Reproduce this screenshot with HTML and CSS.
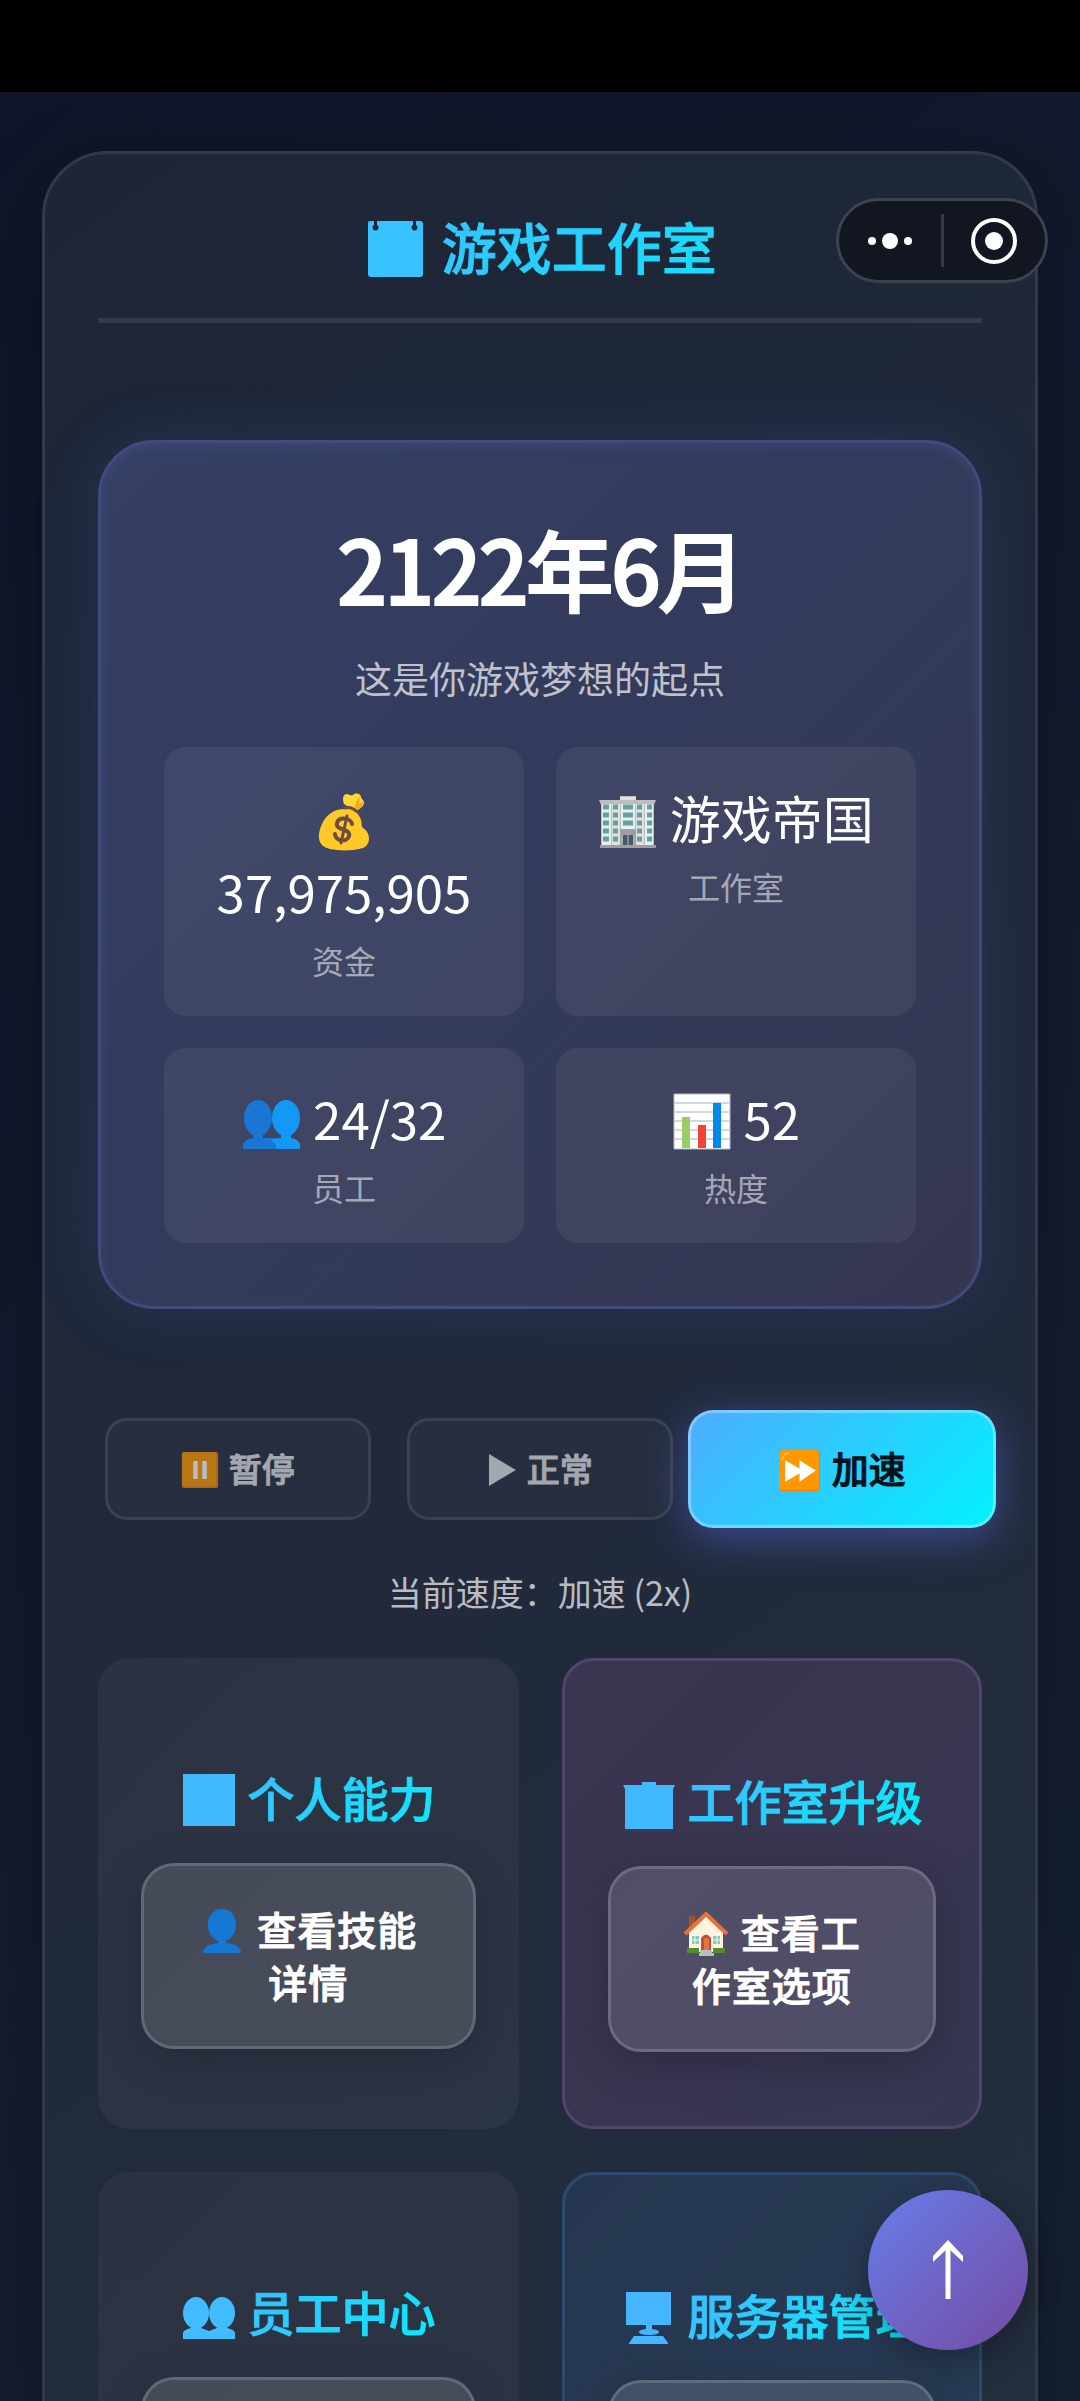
FILE: index.html
```html
<!DOCTYPE html>
<html lang="zh-CN">
<head>
    <meta charset="UTF-8">
    <meta name="viewport" content="width=device-width, initial-scale=1.0">
    <title>游戏工作室</title>
    <link rel="stylesheet" href="styles.css">
</head>
<body>
    <div class="status-bar"></div>

    <div class="container">
        <header class="header">
            <h1>
                <svg class="icon-title" viewBox="0 0 64 64" aria-hidden="true">
                    <path fill="#38c2ff" d="M7 4H11V8A3 3 0 1 0 14 8V4H50V8A3 3 0 1 0 53 8V4H57Q60 4 60 7V57Q60 60 57 60H8Q5 60 5 57V6Q5 4 7 4Z"/>
                </svg>
                游戏工作室
            </h1>
        </header>

        <section class="hero">
            <h2 class="date">2122年6月</h2>
            <p class="subtitle">这是你游戏梦想的起点</p>
            <div class="stats">
                <div class="stat">
                    <div class="stat-value">
                        <svg class="emoji" viewBox="0 0 60 60" aria-hidden="true">
                            <path fill="#fdd835" d="M30 13C28 8 29 3 33 3C36 4 38 5 39 4C42 1 47 3 47 6C48 9 51 10 50 13C48 17 44 19 41 20Z"/>
                            <path fill="#f9a825" d="M40 18L43 9L46 5L45 13L50 10C50 15 45 18 41 20Z"/>
                            <path fill="#ffca28" d="M31 18C20 18 12 24 8 33C3 44 3 55 16 58C26 60 40 60 49 57C58 53 56 41 49 37C47 35 48 32 47 29C45 23 41 19 36 18Z"/>
                            <path fill="none" stroke="#6d4c41" stroke-width="3" stroke-linecap="round" d="M31 17Q37 15 42 20"/>
                            <path fill="none" stroke="#6d4c41" stroke-width="4" stroke-linecap="round" d="M38 33C37 27 25 25 23 32C21 40 37 37 35 45C33 52 21 50 21 43"/>
                            <path stroke="#6d4c41" stroke-width="3" stroke-linecap="round" d="M33 25L27 52"/>
                        </svg>
                        37,975,905
                    </div>
                    <div class="stat-label">资金</div>
                </div>
                <div class="stat">
                    <div class="stat-value">
                        <svg class="emoji" viewBox="0 0 60 60" aria-hidden="true">
                            <path fill="#bdbdbd" d="M22 5H38V9H58L56 14V57H3V14L1 9H22Z"/>
                            <path fill="#e0f2f1" d="M4 13H13V54H4ZM23 13H37V54H23ZM47 13H55V54H47Z"/>
                            <path fill="#e0e0e0" d="M14 13H22V54H14ZM38 13H46V54H38ZM22 6H38V9H22Z"/>
                            <path stroke="#689f9f" stroke-width="5" d="M5 16H11M5 24H11M5 32H11M5 40H11M5 48H11M15 16H20M15 24H20M15 32H20M15 40H20M15 48H20M25 16H35M25 24H35M25 32H35M39 16H44M39 24H44M39 32H44M39 40H44M39 48H44M49 16H54M49 24H54M49 32H54M49 40H54M49 48H54"/>
                            <path fill="#9e9e9e" d="M22 38H38V54H22ZM2 54H58V57H2Z"/>
                            <path fill="#455a64" d="M25 44H35V54H25Z"/>
                            <path stroke="#b0bec5" stroke-width="1" d="M24 44V54M30 44V54M36 44V54"/>
                        </svg>
                        游戏帝国
                    </div>
                    <div class="stat-label">工作室</div>
                </div>
                <div class="stat">
                    <div class="stat-value">
                        <svg class="emoji" viewBox="0 0 60 60" aria-hidden="true">
                            <ellipse cx="16" cy="26" rx="14" ry="18" fill="#1976d2"/>
                            <path fill="#1976d2" d="M11 40H21V46H34V57H1V53Q1 48 11 46Z"/>
                            <ellipse cx="44" cy="26" rx="14" ry="18" fill="#1399f5"/>
                            <path fill="#1399f5" d="M39 40H49V46Q58 48 58 53V57H34V53Q32 50 29 48Q33 46 39 46Z"/>
                        </svg>
                        24/32
                    </div>
                    <div class="stat-label">员工</div>
                </div>
                <div class="stat">
                    <div class="stat-value">
                        <svg class="emoji" viewBox="0 0 60 60" aria-hidden="true">
                            <path fill="#fff" stroke="#b0bec5" d="M2 2H58V57H2Z"/>
                            <path stroke="#cfd8dc" stroke-width="2" d="M3 11H57M3 20H57M3 29H57M3 38H57M3 47H57"/>
                            <path fill="#9ccc65" d="M10 25H18V56H10Z"/>
                            <path fill="#f44336" d="M26 33H34V56H26Z"/>
                            <path fill="#0288e8" d="M41 11H49V56H41Z"/>
                        </svg>
                        52
                    </div>
                    <div class="stat-label">热度</div>
                </div>
            </div>
        </section>

        <div class="speed-controls">
            <button type="button" class="speed-btn">
                <svg class="icon-speed" viewBox="0 0 42 42" aria-hidden="true">
                    <rect x="1" y="1" width="40" height="40" rx="3" fill="#f57c00"/>
                    <rect x="1" y="1" width="38" height="38" rx="3" fill="#ff9800"/>
                    <path stroke="#fff" stroke-width="5" d="M16 11V31M26 11V31"/>
                </svg>
                暂停
            </button>
            <button type="button" class="speed-btn">
                <svg class="icon-play" viewBox="0 0 30 36" aria-hidden="true">
                    <path fill="currentColor" d="M2 2L29 18L2 34Z"/>
                </svg>
                正常
            </button>
            <button type="button" class="speed-btn active">
                <svg class="icon-speed" viewBox="0 0 42 42" aria-hidden="true">
                    <rect x="1" y="1" width="40" height="40" rx="3" fill="#f57c00"/>
                    <rect x="1" y="1" width="39" height="39" rx="3" fill="#ff9800"/>
                    <path stroke="#ffbd52" stroke-width="2" stroke-linecap="round" fill="none" d="M4 10Q5 5 10 4"/>
                    <path fill="#fff" d="M7 11L21 19V11L37 21L21 32V24L7 32Z"/>
                </svg>
                加速
            </button>
        </div>
        <p class="speed-text">当前速度：加速 (2x)</p>

        <main class="cards">
            <section class="card">
                <h3>
                    <svg class="icon-card" viewBox="0 0 56 56" aria-hidden="true">
                        <path fill="#40bbff" d="M2 2H54V54H2Z"/>
                    </svg>
                    个人能力
                </h3>
                <button type="button" class="card-btn">
                    <svg class="emoji-btn" viewBox="0 0 46 46" aria-hidden="true">
                        <path fill="#1478d4" d="M23 1C32 1 37 8 37 17C37 25 32 31 27 33V35C35 36 42 38 42 45H4C4 38 11 36 19 35V33C14 31 9 25 9 17C9 8 14 1 23 1Z"/>
                    </svg>
                    查看技能<br>详情
                </button>
            </section>

            <section class="card card-studio">
                <h3>
                    <svg class="icon-card" viewBox="0 0 56 56" aria-hidden="true">
                        <path fill="#41b9ff" d="M21 7H35V10H54L52 14V54H4V14L2 10H21Z"/>
                    </svg>
                    工作室升级
                </h3>
                <button type="button" class="card-btn">
                    <svg class="emoji-btn" viewBox="0 0 46 46" aria-hidden="true">
                        <path fill="#a1512f" d="M6 5H12V18H6Z"/>
                        <path fill="#fff3e0" d="M6 21L23 5L40 21V41H6Z"/>
                        <path fill="none" stroke="#e8703a" stroke-width="4" d="M2 23L23 3L44 23"/>
                        <path fill="#80cbc4" d="M9 25H16V33H9ZM30 25H37V33H30Z"/>
                        <path stroke="#fff3e0" d="M12 25V33M9 29H16M34 25V33M30 29H37"/>
                        <path fill="#bf4f33" d="M18 40V27Q23 20 28 27V40Z"/>
                        <path fill="#e57348" d="M21 39V28Q23 25 26 28V39Z"/>
                        <path fill="#558b2f" d="M4 37H16V42H4ZM30 37H42V42H30Z"/>
                        <path fill="#bdbdbd" d="M17 39H29V42H31V45H16V42H17Z"/>
                    </svg>
                    查看工<br>作室选项
                </button>
            </section>

            <section class="card">
                <h3>
                    <svg class="icon-card" viewBox="0 0 56 56" aria-hidden="true">
                        <ellipse cx="15" cy="27" rx="13" ry="16" fill="#40bcff"/>
                        <ellipse cx="41" cy="27" rx="13" ry="16" fill="#40bcff"/>
                        <path fill="#40bcff" d="M10 38H20V42L28 45L36 42V38H46V42Q54 44 54 47V53H2V47Q2 44 10 42Z"/>
                    </svg>
                    员工中心
                </h3>
                <button type="button" class="card-btn" aria-label="员工中心"></button>
            </section>

            <section class="card card-server">
                <h3>
                    <svg class="icon-card" viewBox="0 0 56 56" aria-hidden="true">
                        <path fill="#45b6ff" d="M5 3H50V36H31V40Q38 41 38 43Q38 46 28 46Q18 46 18 43Q18 41 25 40V36H5ZM13 47H42L47 54V55H8V54Z"/>
                    </svg>
                    服务器管理
                </h3>
                <button type="button" class="card-btn" aria-label="服务器管理"></button>
            </section>
        </main>
    </div>

    <div class="capsule">
        <button type="button" aria-label="更多">
            <svg width="48" height="48" viewBox="0 0 48 48">
                <g fill="#fff"><circle cx="6" cy="24" r="4"/><circle cx="24" cy="24" r="8"/><circle cx="42" cy="24" r="4"/></g>
            </svg>
        </button>
        <button type="button" aria-label="关闭">
            <svg width="48" height="48" viewBox="0 0 48 48">
                <circle cx="24" cy="24" r="21" fill="none" stroke="#fff" stroke-width="4"/>
                <circle cx="24" cy="24" r="9" fill="#fff"/>
            </svg>
        </button>
    </div>

    <button type="button" class="back-top" aria-label="回到顶部">
        <svg width="34" height="60" viewBox="0 0 34 60">
            <path fill="none" stroke="#fff" stroke-width="5" d="M17 59V4"/>
            <path fill="#fff" d="M17 0L32 16V22L17 8L2 22V16Z"/>
        </svg>
    </button>
</body>
</html>
```
FILE: styles.css
```css
* {
    margin: 0;
    padding: 0;
    box-sizing: border-box;
    font-family: 'Noto Sans CJK SC', sans-serif;
}

body {
    height: 100vh;
    overflow: hidden;
    background: linear-gradient(135deg, #101529 0%, #131b2e 50%, #172131 100%);
    color: #fff;
}

.status-bar {
    height: 92px;
    background: #000;
    position: relative;
    z-index: 1;
}

.container {
    margin: 59px 42px;
    padding: 51px 53px;
    background: linear-gradient(145deg, #1f2536 0%, #1e2738 15%, #21293b 50%, #232f3d 100%);
    border: 3px solid #323949;
    border-radius: 66px;
    box-shadow: 0 22px 80px rgba(0, 0, 0, 0.3);
}

.header {
    padding-bottom: 33px;
    border-bottom: 5px solid #343a4b;
    border-radius: 2px;
    text-align: center;
}

h1,
h3 {
    background: linear-gradient(135deg, #4facfe 0%, #00f2fe 100%);
    background-clip: text;
    -webkit-background-clip: text;
    -webkit-text-fill-color: transparent;
    -webkit-text-stroke: 1px transparent;
}

h1 {
    font-size: 55px;
    font-weight: 500;
    line-height: 80px;
}

.icon-title {
    width: 64px;
    height: 64px;
    margin-right: 2px;
    vertical-align: -12px;
}

.hero {
    margin-top: 117px;
    padding: 60px 63px 63px;
    text-align: center;
    background: linear-gradient(135deg, #354064 0%, #333b5c 45%, #353651 100%);
    border: 3px solid #414b7d;
    border-radius: 56px;
    box-shadow: 0 0 60px rgba(60, 90, 170, 0.25), inset 0 3px 12px rgba(102, 126, 234, 0.15);
}

.date {
    font-size: 88px;
    font-weight: 500;
    line-height: 128px;
    letter-spacing: -3px;
    -webkit-text-stroke: 2px #fff;
}

.subtitle {
    margin-top: 20px;
    font-size: 37px;
    line-height: 54px;
    color: rgba(255, 255, 255, 0.7);
}

.stats {
    display: grid;
    grid-template-columns: 1fr 1fr;
    gap: 32px;
    margin-top: 42px;
}

.stat {
    padding: 33px;
    background: rgba(255, 255, 255, 0.06);
    border-radius: 22px;
}

.stat-value {
    font-size: 51px;
    line-height: 74px;
}

.stat-label {
    margin-top: 9px;
    font-size: 32px;
    line-height: 46px;
    color: rgba(255, 255, 255, 0.55);
}

.emoji {
    width: 60px;
    height: 60px;
    vertical-align: -12px;
}

.speed-controls {
    display: grid;
    grid-template-columns: repeat(3, 1fr);
    grid-auto-rows: 108px;
    gap: 22px;
    margin-top: 106px;
}

.speed-btn {
    margin: 3px 7px;
    padding-bottom: 2px;
    font-size: 33px;
    font-weight: 500;
    color: #a3a7af;
    background: #272e3f;
    border: 3px solid #3a4150;
    border-radius: 22px;
    -webkit-text-stroke: 1px currentColor;
    cursor: pointer;
}

.speed-btn.active {
    margin: -5px -14px;
    font-size: 37px;
    color: #06121a;
    background: linear-gradient(135deg, #4facfe 0%, #00f2fe 100%) border-box;
    border-color: rgba(255, 255, 255, 0.3);
    border-radius: 25px;
    box-shadow: 0 10px 44px rgba(90, 110, 230, 0.5);
}

.icon-speed {
    width: 38px;
    height: 38px;
    margin-right: 2px;
    vertical-align: -7px;
    opacity: 0.68;
}

.active .icon-speed {
    width: 43px;
    height: 43px;
    vertical-align: -8px;
    opacity: 1;
}

.icon-play {
    width: 30px;
    height: 36px;
    margin-right: 2px;
    vertical-align: -6px;
}

.speed-text {
    margin-top: 44px;
    font-size: 34px;
    line-height: 50px;
    text-align: center;
    color: rgba(255, 255, 255, 0.7);
}

.cards {
    display: grid;
    grid-template-columns: 1fr 1fr;
    gap: 43px;
    margin-top: 41px;
}

.card {
    padding: 105px 43px 74px;
    text-align: center;
    background: linear-gradient(135deg, #2c3242 0%, #2c3545 100%);
    border-radius: 32px;
}

.card-studio {
    background: linear-gradient(135deg, #3a3550 0%, #363653 100%);
    border: 3px solid #51456b;
}

.card-server {
    background: linear-gradient(135deg, #263650 0%, #283b54 100%);
    border: 3px solid #2d4b70;
}

h3 {
    font-size: 47px;
    font-weight: 500;
    line-height: 68px;
    white-space: nowrap;
}

.icon-card {
    width: 56px;
    height: 56px;
    vertical-align: -11px;
}

.card-btn {
    width: 100%;
    margin-top: 32px;
    padding: 36px 30px 38px;
    font-size: 39px;
    font-weight: 500;
    line-height: 53px;
    letter-spacing: 1px;
    color: #fff;
    background: rgba(255, 255, 255, 0.12);
    border: 3px solid rgba(255, 255, 255, 0.16);
    border-radius: 33px;
    box-shadow: 0 11px 44px rgba(0, 0, 0, 0.2);
    -webkit-text-stroke: 1px #fff;
    cursor: pointer;
}

.emoji-btn {
    width: 46px;
    height: 46px;
    margin-right: 2px;
    vertical-align: -9px;
}

/* floats over the page in the top right corner */
.capsule {
    position: fixed;
    top: 198px;
    right: 32px;
    width: 212px;
    height: 85px;
    display: flex;
    align-items: center;
    background: #121620;
    border: 3px solid #3d424c;
    border-radius: 43px;
}

.capsule button {
    flex: 1;
    height: 53px;
    display: flex;
    align-items: center;
    justify-content: center;
    background: none;
    border: none;
    cursor: pointer;
}

.capsule button + button {
    border-left: 3px solid #343945;
}

.back-top {
    position: fixed;
    right: 52px;
    bottom: 51px;
    width: 160px;
    height: 160px;
    display: flex;
    align-items: center;
    justify-content: center;
    background: linear-gradient(135deg, #667eea 0%, #764ba2 100%);
    border: none;
    border-radius: 50%;
    box-shadow: 0 11px 33px rgba(0, 0, 0, 0.3);
    cursor: pointer;
}
```
